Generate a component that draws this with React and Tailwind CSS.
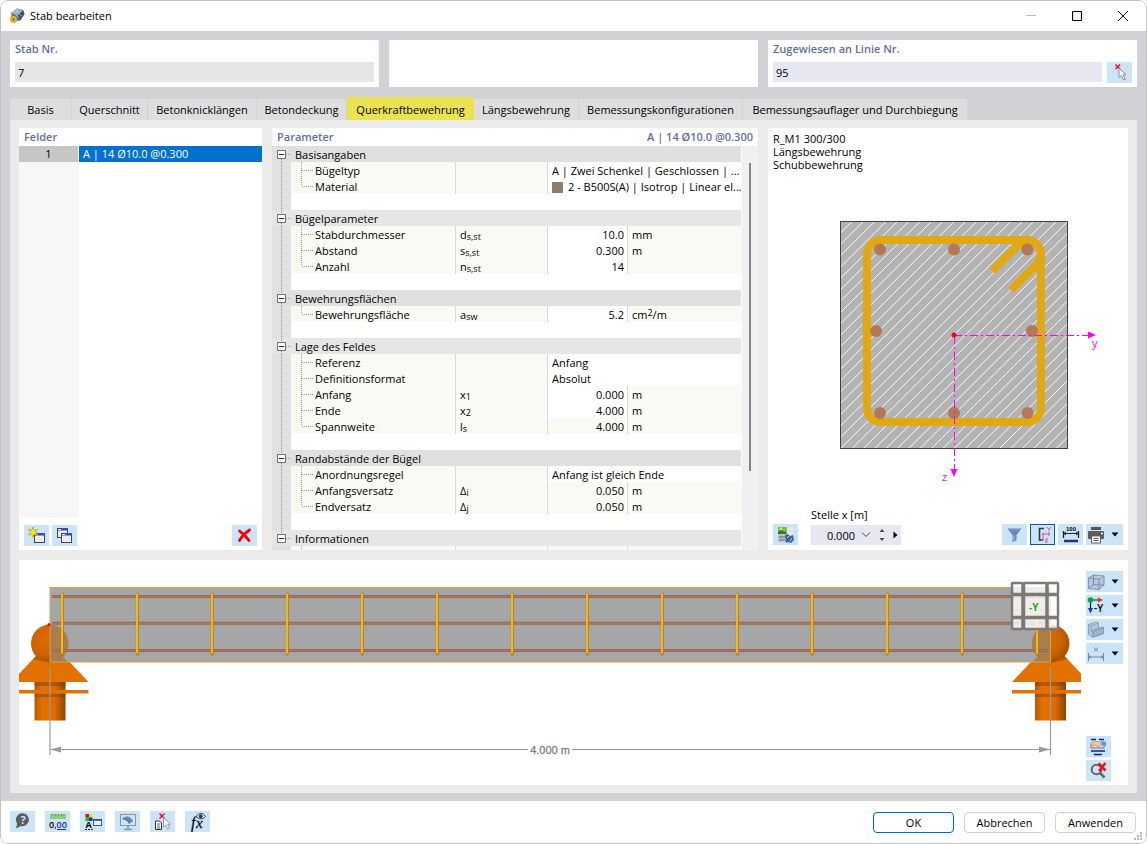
import { useState } from "react";
import clsx from "clsx";

const TABS = [
    { label: "Basis", width: "w-[62px]" },
    { label: "Querschnitt", width: "w-[76px]" },
    { label: "Betonknicklängen", width: "w-[109px]" },
    { label: "Betondeckung", width: "w-[90px]" },
    { label: "Querkraftbewehrung", width: "w-[127px]" },
    { label: "Längsbewehrung", width: "w-[105px]" },
    { label: "Bemessungskonfigurationen", width: "w-[164px]" },
    { label: "Bemessungsauflager und Durchbiegung", width: "w-[225px]" },
];

const GROUPS = [
    {
        title: "Basisangaben",
        rows: [
            { name: "Bügeltyp", text: "A | Zwei Schenkel | Geschlossen | ..." },
            { name: "Material", text: "2 - B500S(A) | Isotrop | Linear el...", swatch: true },
        ],
    },
    {
        title: "Bügelparameter",
        rows: [
            { name: "Stabdurchmesser", sym: "d", sub: "s,st", value: "10.0", unit: "mm" },
            { name: "Abstand", sym: "s", sub: "s,st", value: "0.300", unit: "m" },
            { name: "Anzahl", sym: "n", sub: "s,st", value: "14" },
        ],
    },
    {
        title: "Bewehrungsflächen",
        rows: [{ name: "Bewehrungsfläche", sym: "a", sub: "sw", value: "5.2", unit: "cm", sup: "2", per: "/m" }],
    },
    {
        title: "Lage des Feldes",
        rows: [
            { name: "Referenz", text: "Anfang" },
            { name: "Definitionsformat", text: "Absolut" },
            { name: "Anfang", sym: "x", sub: "1", value: "0.000", unit: "m" },
            { name: "Ende", sym: "x", sub: "2", value: "4.000", unit: "m" },
            { name: "Spannweite", sym: "l", sub: "s", value: "4.000", unit: "m", locked: true },
        ],
    },
    {
        title: "Randabstände der Bügel",
        rows: [
            { name: "Anordnungsregel", text: "Anfang ist gleich Ende" },
            { name: "Anfangsversatz", sym: "Δ", sub: "i", value: "0.050", unit: "m", locked: true },
            { name: "Endversatz", sym: "Δ", sub: "j", value: "0.050", unit: "m", locked: true },
        ],
    },
    { title: "Informationen", rows: [{ name: "", value: "", locked: true }], last: true },
];

const IconButton = ({ label, wide, active, children }) => (
    <button
        type="button"
        aria-label={label}
        className={clsx(
            "flex h-[21px] shrink-0 items-center bg-[#cce4f7]",
            wide ? "w-[37px] justify-start" : "w-[25px] justify-center",
            active && "border border-[#005a9e]"
        )}
    >
        <svg viewBox="0 0 20 20" className="h-5 w-5 shrink-0">{children}</svg>
        {wide && (
            <svg viewBox="0 0 8 5" className="ml-[5px] h-[5px] w-2"><path d="M0.500 0.500h7L4 4.500z" /></svg>
        )}
    </button>
);

const Heading = ({ children }) => (
    <span className="text-[11px] leading-[18px] font-semibold text-[#5f709b]">{children}</span>
);

/* ---- icons ---- */

const CursorIcon = () => (
    <g>
        <path d="M5.500 1.500l4.500 4.500M10 1.500L5.500 6" stroke="#e81123" strokeWidth="1.500" />
        <path d="M9 5v9.500l2.300-2 2.200 4.500 1.800-.8-2.200-4.400h3z" fill="#fff" stroke="#8a8a8a" />
    </g>
);

const WindowShape = ({ x, y }) => (
    <g>
        <rect x={x + 0.5} y={y + 0.5} width="10" height="9" fill="#ececec" stroke="#444" />
        <rect x={x + 4} y={y} width="7" height="2" fill="#2b50e0" />
        <path d={`M${x + 1} ${y + 2.5}h9`} stroke="#777" strokeWidth=".7" />
    </g>
);

const NewIcon = () => (
    <g>
        <WindowShape x={7} y={7} />
        <path d="M6 1l1.200 3.300 3.300-.8-2 2.700 2 2.700-3.300-.7-1.200 3-1.200-3-3.300.7 2-2.700-2-2.700 3.300.8z" fill="#f8f000" stroke="#8d9a20" strokeWidth=".6" />
    </g>
);

const CopyIcon = () => (
    <g><WindowShape x={2} y={2} /><WindowShape x={6} y={7} /></g>
);

const DeleteIcon = () => (
    <path d="M4.500 5C7.500 7.500 11 10 14 14.500M14.500 4C11 6.500 7 10 4.500 14.500" stroke="#fa0000" strokeWidth="2.800" fill="none" strokeLinecap="round" />
);

const ImageExportIcon = () => (
    <g>
        <rect x="2" y="2" width="11" height="15" fill="#b9c9b8" />
        <path d="M10 2h7v9h-7z" fill="#dfe9e6" />
        <rect x="2" y="2" width="9" height="7" fill="#7fb95a" />
        <path d="M2 7l3-3 3 3 1-1 2 3H2z" fill="#287a42" />
        <circle cx="5" cy="4" r="1.500" fill="#f5df2b" />
        <path d="M3 11h6v2H3zM3 14h6v2H3z" fill="#8b979c" />
        <path d="M9 10l3-1 2 2 3-1 1 5-3 3-3-1-2 1z" fill="#3e6690" />
        <path d="M11 13l2-2m1 5l2-3" stroke="#a7d4f4" />
    </g>
);

const FilterIcon = () => (
    <g>
        <path d="M2.500 3.500h14L11.500 10v5.500l-4 1.500v-7z" fill="#6687be" />
        <path d="M4.500 4.500h10l-1 1h-8z" fill="#7f9ccb" />
        <path d="M9 10.500v5" stroke="#b7c9e5" />
    </g>
);

const AxesIcon = () => (
    <g fill="none">
        <path d="M11 3.500H6.500V15h3.500" stroke="#2d3557" strokeWidth="1.600" />
        <path d="M10 9h7M10 9v7M15 7l2 2-2 2" stroke="#d95990" />
        <path d="M14 2l2 2.500L18 2m-2 2.500V6M12 14h3l-3 3h3" stroke="#d95990" />
        <circle cx="10" cy="9" r="1" fill="#d95990" />
    </g>
);

const DimensionIcon = () => (
    <g>
        <path d="M2.500 6v7M17.500 6v7" stroke="#222" strokeWidth="1.300" />
        <path d="M3 8.500h14M5 7L3 8.500 5 10M15 7l2 1.500-2 1.500" stroke="#222" fill="none" />
        <path d="M3 16h14" stroke="#24336a" strokeWidth="2.500" />
        <text x="5" y="5.500" fontSize="6" fontWeight="700" fontFamily="Liberation Sans, sans-serif">100</text>
    </g>
);

const PrinterIcon = () => (
    <g>
        <rect x="5" y="2" width="10" height="3" fill="#555" />
        <rect x="2" y="6" width="16" height="8" rx="1" fill="#5c5c5c" />
        <path d="M5.500 11h9v7h-9z" fill="#fff" stroke="#5c5c5c" />
        <path d="M7.500 13.500h5M7.500 15.500h5" stroke="#555" />
        <circle cx="16" cy="8.500" r="1" fill="#fff" />
    </g>
);

const CubeIcon = () => (
    <g stroke="#7c8ba6" fill="#b3c7e2" strokeWidth=".9">
        <path d="M2.500 6l5-3L18 4v9l-5 4.500-10.500-1z" />
        <path d="M2.500 6l10.500 1 5-3" fill="#c5d6ea" />
        <path d="M13 7v10.500M7.500 3v9.500l-5 4M7.500 12.500L18 13" fill="none" />
    </g>
);

const ViewIcon = () => (
    <g>
        <path d="M4.500 4h9M4.500 5v9" stroke="#222" strokeWidth="1.200" />
        <path d="M12 1.500l5 2.500-5 2.500z" fill="#d43c10" />
        <path d="M2 12h5l-2.500 5.500z" fill="#1238c4" />
        <circle cx="4.500" cy="4" r="2.800" fill="#00a651" />
        <text x="8" y="16" fontSize="10" fontWeight="600" fontFamily="Open Sans, sans-serif">-Y</text>
    </g>
);

const StairsIcon = () => (
    <g stroke="#8795ac" strokeWidth=".8">
        <path d="M2.500 4.500l7-2.500 3 1v5l5-1v6.500l-11 4-4-3z" fill="#b3c7df" />
        <path d="M2.500 4.500L5 6l7.500-3M5 6v5l2 1v5M7 12l10.500-4.500M5 11l7.500-3" fill="none" />
        <path d="M7 12l10.500-4.500v6L7 17z" fill="#9db3cd" />
    </g>
);

const SpanIcon = () => (
    <g stroke="#7185a4" fill="none">
        <path d="M2.500 9v8M17.500 9v8M3 13h14M5 11.500L3 13l2 1.500M15 11.500l2 1.500-2 1.500M8 3.500l4 4M12 3.500l-4 4" />
    </g>
);

const LinesIcon = () => (
    <g>
        <path d="M2 2.500h5M10 2.500h5M2 14h14M5 17.500h8" stroke="#101f8e" strokeWidth="1.300" />
        <rect x="2" y="7" width="13" height="4" fill="#ddd" stroke="#777" />
        <path d="M2 6l4-2 5 1 2 3-4 2-2-2-4 1z" fill="#efc7a4" stroke="#b38665" strokeWidth=".6" />
        <path d="M12 4l5 1v4l-4-1z" fill="#5c96d6" />
    </g>
);

const ZoomResetIcon = () => (
    <g fill="none">
        <circle cx="7.500" cy="8.500" r="4.800" stroke="#666" strokeWidth="2" />
        <path d="M11 12l4.500 4.500" stroke="#666" strokeWidth="2.500" />
        <path d="M9.500 2.500l7 7M16.500 2l-6.500 8" stroke="#f20d18" strokeWidth="2.600" />
    </g>
);

const HelpIcon = () => (
    <g>
        <path d="M3 16.500L4.200 11.500A6.500 6.500 0 1 1 8 14z" fill="#5d5d5d" />
        <text x="7.500" y="12" fontSize="11" fontWeight="700" fill="#cce4f7" fontFamily="Open Sans, sans-serif">?</text>
    </g>
);

const DecimalsIcon = () => (
    <g>
        <path d="M2 2h16v5H2z" fill="#8fce7f" />
        <path d="M4.500 2v2M7.500 2v2M10.500 2v2M13.500 2v2M16 2v2" stroke="#4e9443" strokeWidth=".7" />
        <text x="1" y="15.500" fontSize="9" fontWeight="600" fontFamily="Open Sans, sans-serif">0,<tspan fill="#1d2f9c">00</tspan></text>
        <path d="M9 17.500h9" stroke="#1d2f9c" />
    </g>
);

const DisplayIcon = () => (
    <g>
        <path d="M2.500 2H6v3.500H2.500z" fill="#e00" /><path d="M6 2h3.500v3.500H6z" fill="#ee0" />
        <path d="M2.500 5.500H6V9H2.500z" fill="#0c0" /><path d="M6 5.500h3.500V9H6z" fill="#22d" />
        <text x="2.500" y="16" fontSize="9" fontWeight="700" fontFamily="Open Sans, sans-serif">A</text>
        <path d="M2 17.500h8" stroke="#222" strokeDasharray="2 1" />
        <rect x="10.500" y="7.500" width="8" height="6" fill="#eee" stroke="#556" />
        <path d="M10 8h9" stroke="#24479e" strokeWidth="1.500" />
    </g>
);

const MonitorIcon = () => (
    <g>
        <rect x="2.500" y="2.500" width="15" height="11" fill="#cce4f7" stroke="#8a949d" />
        <path d="M10 14v3M6 17.500h8" stroke="#8a949d" strokeWidth="1.500" />
        <path d="M4 7c4-4 8-3 11 2l-4 3c-1-3-3-4-7-5z" fill="#456f9f" />
        <path d="M6 5.500c3 0 5 2 6.500 5M9 4.500c2 1 3.500 2.500 5 5" stroke="#a0c2df" strokeWidth=".7" fill="none" />
    </g>
);

const PickListIcon = () => (
    <g>
        <path d="M2.500 9h4l2 2v6.500h-6z" fill="#fff" stroke="#333" />
        <path d="M4 12h3M4 14h3M4 16h3" stroke="#333" strokeWidth=".8" />
        <path d="M6.500 1.500l5 5M11.500 1.500l-5 5" stroke="#e81123" strokeWidth="1.500" />
        <path d="M10.500 5.500V15l2.300-2 2 4 1.800-.8-2-4h3z" fill="#fff" stroke="#999" />
    </g>
);

const FormulaIcon = () => (
    <g>
        <text x="3" y="15.500" fontSize="16" fontStyle="italic" fill="#111" stroke="#111" strokeWidth=".3" fontFamily="Liberation Serif, serif">f</text>
        <text x="8" y="15.500" fontSize="15" fontStyle="italic" fill="#111" stroke="#111" strokeWidth=".3" fontFamily="Liberation Serif, serif">x</text>
        <path d="M8 4.500c3-4 7-4 9.500 0-3 3-6.500 3-9.500 0z" fill="#fff" stroke="#26346e" />
        <circle cx="12.700" cy="4.200" r="2" fill="#26346e" />
    </g>
);

const AppLogo = () => (
    <svg viewBox="0 0 16 16" className="h-4 w-4">
        <path d="M2 5l6-4.500 6 1.500 1.500 4-4.500 6.500-6 1z" fill="#5b6f8c" />
        <path d="M8 .5L14 2 8 6.500 2 5z" fill="#a2b2c8" />
        <path d="M14 2l1.500 4-4.500 6.500L8 6.500z" fill="#3b5070" />
        <path d="M4 3.500l6 6M6.500 2l6 6M13 3l-7 6" stroke="#d4dce8" strokeWidth=".7" />
        <path d="M2.500 9V8c0-2.500 4-2.500 4 0v1" fill="none" stroke="#b28a18" />
        <circle cx="4.500" cy="11.500" r="3.500" fill="#e2b62c" />
        <path d="M3.500 10h2v3h-2z" fill="#a77b12" />
    </svg>
);

/* ---- drawings ---- */

const REBARS = [[50, 39.5], [124, 39.5], [197.5, 39.5], [46, 121], [202, 121], [50, 203], [124, 203], [197.5, 203]];

// 45° lines over the whole concrete area, clipped to it
const HATCH = Array.from({ length: 40 }, (_, i) => 22 + i * 11.35);

const SectionDrawing = () => (
    <svg viewBox="0 0 290 280" className="h-[280px] w-[290px] shrink-0">
        <clipPath id="concrete">
            <rect x="10.500" y="11.500" width="227" height="227" />
        </clipPath>
        <rect x="10.500" y="11.500" width="227" height="227" fill="#b3b3b3" />
        <g clipPath="url(#concrete)" stroke="#fafafa" strokeWidth="1">
            {HATCH.map((x) => (
                <path key={x} d={`M${x} 11.500l-230 230`} />
            ))}
        </g>
        <rect x="10.500" y="11.500" width="227" height="227" fill="none" stroke="#404040" />
        <g fill="none" stroke="#e0a913" strokeWidth="8">
            <rect x="37" y="30" width="174" height="182" rx="14" />
            <path d="M162 61l24-24c3-3 7-7 12-7M181 80l25-25c3-3 5-6 5-11" />
        </g>
        {REBARS.map(([x, y]) => (
            <circle key={`${x}-${y}`} cx={x} cy={y} r="6" fill="#b47858" />
        ))}
        <path d="M124 125.500h134M124.500 126v134" stroke="#f0f" strokeDasharray="8 3 2 3" />
        <path d="M258 121.500l8 3.500-8 3.500zM120.500 259h7l-3.500 8z" fill="#f0f" />
        <circle cx="124" cy="125" r="2.500" fill="#f00" />
        <g fill="#f0f" fontSize="11" fontFamily="Open Sans, sans-serif">
            <text x="262" y="137">y</text>
            <text x="112" y="271">z</text>
        </g>
    </svg>
);

const STIRRUPS = Array.from({ length: 14 }, (_, i) => 43.3 + i * 75);

const Support = ({ x }) => (
    <g transform={`translate(${x} 0)`}>
        <rect x="-15.500" y="120" width="31" height="40.500" fill="url(#steel)" />
        <path d="M-15.500 122h31v4h-31zM-15.500 134h31v3h-31z" fill="#7d3c00" opacity=".45" />
        <path d="M-14 96h28l24.500 26h-77z" fill="#e27100" />
        <path d="M-14 96h28l3 3q-17 5-34 0z" fill="#9c4a00" opacity=".6" />
        <rect x="-38.500" y="130" width="77" height="3.500" fill="#e27100" />
        <circle cy="83.500" r="19" fill="url(#ball)" />
    </g>
);

const BeamDrawing = () => (
    <svg viewBox="0 0 1062 225" className="h-[225px] min-w-0 flex-1">
        <defs>
            <linearGradient id="steel">
                <stop offset="0" stopColor="#b85a00" />
                <stop offset=".25" stopColor="#e27100" />
                <stop offset=".65" stopColor="#dd6d00" />
                <stop offset="1" stopColor="#8c4400" />
            </linearGradient>
            <radialGradient id="ball" cx=".4" cy=".4" r=".65">
                <stop offset="0" stopColor="#df6d00" />
                <stop offset=".6" stopColor="#cc6300" />
                <stop offset="1" stopColor="#a34e00" />
            </radialGradient>
        </defs>
        <Support x={31} />
        <Support x={1031.5} />
        <rect x="31" y="27.500" width="1000.500" height="74.500" fill="#a6a6a6" />
        {/* supports showing through the concrete */}
        <g fill="#ad6c28" opacity=".7">
            <path d="M31 64.500a19 19 0 0 1 13 32.500l5 5H31z" />
            <path d="M1031.500 64.500a19 19 0 0 0-13 32.500l-5 5h18z" />
        </g>
        <rect x="31" y="27.500" width="1000.500" height="74.500" fill="none" stroke="#d9a24a" />
        {[36.5, 63.3, 90.4].map((y) => (
            <g key={y}>
                <path d={`M33 ${y}h996`} stroke="#8f6a5a" strokeWidth="3" />
                <path d={`M33 ${y}h996`} stroke="#ae7d68" strokeWidth="1" />
            </g>
        ))}
        {STIRRUPS.map((x) => (
            <g key={x} strokeLinecap="round">
                <path d={`M${x} 34v60`} stroke="#b57d10" strokeWidth="3" />
                <path d={`M${x - 0.3} 34v59`} stroke="#ffc91c" strokeWidth="1.600" />
            </g>
        ))}
        <circle cx="30" cy="64.500" r="1.500" fill="#f00" />
        <g stroke="#9b9b9f" strokeWidth="1.200">
            <path d="M31 107v88M1031.500 107v88M31 189.500h478M553 189.500h478" />
        </g>
        <path d="M31 189.500l11-3v6zM1031 189.500l-11-3v6z" fill="#9b9b9f" />
        <text x="531" y="193.500" fontSize="11" textAnchor="middle" fill="#7f7f84" stroke="#7f7f84" strokeWidth=".3" fontFamily="Liberation Sans, sans-serif">4.000 m</text>
        <g fill="#fff" fillOpacity=".8" stroke="#7c7977" strokeWidth="2.500">
            {[[992.5, 11], [1004.5, 23], [1028, 11]].map(([x, w]) =>
                [[23, 11], [35, 22], [58, 11]].map(([y, h]) => (
                    <rect key={`${x}-${y}`} x={x + 0.5} y={y} width={w - 0.5} height={h} rx=".8" />
                ))
            )}
        </g>
        <text x="1010" y="51" fontSize="10" fontWeight="700" fill="#2f9c2f" fontFamily="Open Sans, sans-serif">-Y</text>
    </svg>
);

/* ---- parameter tree ---- */

const DOT = { stroke: "#9a9a9a", strokeDasharray: "1 1", shapeRendering: "crispEdges" };

const Gutter = ({ line }) => (
    <td className="bg-[#e1e1e1] p-0">
        <svg viewBox="0 0 19 16" className="block h-4 w-[19px]">
            {line && <path d="M9.500 0v16" {...DOT} />}
        </svg>
    </td>
);

const GroupHead = ({ group, index }) => (
    <tr className={clsx("h-4", index % 2 ? "bg-[#e6e6e6]" : "bg-[#e0e0e0]")}>
        <th colSpan={5} className="p-0 text-left font-normal">
            <div className="flex h-4 items-center">
                <button type="button" aria-label={`${group.title} einklappen`} className="h-4 w-[23px] shrink-0">
                    <svg viewBox="0 0 23 16" className="block h-4 w-[23px]">
                        {index > 0 && <path d="M9.500 0v4" {...DOT} />}
                        {!group.last && <path d="M9.500 13v3" {...DOT} />}
                        <path d="M14 8.500h6" {...DOT} />
                        <rect x="5.500" y="4.500" width="8" height="8" fill="#fff" stroke="#777" />
                        <path d="M7 8.500h5" stroke="#333" />
                    </svg>
                </button>
                <span className="pt-0.5">{group.title}</span>
            </div>
        </th>
    </tr>
);

// leading-[14px] with 2px on top keeps every row at 16px
const cell = "border-l border-[#d9d9d9] pt-0.5 pb-0 pl-1 leading-[14px]";

const ParamRow = ({ row, end, last }) => (
    <tr className="h-4">
        <Gutter line={!last} />
        <td className="bg-[#f9faf4] p-0">
            <div className="flex h-4 items-center">
                <svg viewBox="0 0 24 16" className="h-4 w-6 shrink-0">
                    <path d={end ? "M10.500 0v8" : "M10.500 0v16"} {...DOT} />
                    <path d="M11 8.500h11" {...DOT} />
                </svg>
                <span className="pt-0.5">{row.name}</span>
            </div>
        </td>
        <td className={clsx(cell, "bg-[#f9faf4]")}>
            {row.sym}
            <sub className="relative bottom-0 align-[-1px] text-[9px] leading-none">{row.sub}</sub>
        </td>
        {row.text ? (
            <td colSpan={2} className={clsx(cell, "bg-white")}>
                <div className="flex items-center gap-[5px] whitespace-nowrap">
                    {row.swatch && <span className="h-[11px] w-[11px] shrink-0 bg-[#8f7d6b]" />}
                    {row.text}
                </div>
            </td>
        ) : (
            <>
                <td className={clsx(cell, "pr-[3px] text-right", row.locked ? "bg-[#f9faf4]" : "bg-white")}>
                    {row.value}
                </td>
                <td className={clsx(cell, "bg-[#f9faf4]")}>
                    {row.unit}
                    {row.sup && <sup className="relative top-0 align-[3px] text-[9px] leading-none">{row.sup}</sup>}
                    {row.per}
                </td>
            </>
        )}
    </tr>
);

const ParamTable = () => (
    <table className="w-full table-fixed border-separate border-spacing-0 bg-white text-[11px] leading-[14px]">
        <colgroup>
            <col className="w-[19px]" />
            <col className="w-[164px]" />
            <col className="w-[92px]" />
            <col className="w-20" />
            <col />
        </colgroup>
        {GROUPS.map((group, i) => (
            <tbody key={group.title}>
                <GroupHead group={group} index={i} />
                {group.rows.map((row, r) => (
                    <ParamRow key={row.name} row={row} end={r === group.rows.length - 1} last={group.last} />
                ))}
                {!group.last && (
                    <tr className="h-4">
                        <Gutter line />
                        <td colSpan={4} className="bg-white p-0" />
                    </tr>
                )}
            </tbody>
        ))}
    </table>
);

const TitleBar = () => (
    <header className="flex h-[30px] items-center bg-white pl-2">
        <AppLogo />
        <h1 className="ml-[5px] flex-1 text-[11px]">Stab bearbeiten</h1>
        <button type="button" aria-label="Minimieren" className="flex h-full w-[46px] items-center justify-center">
            <svg viewBox="0 0 10 10" className="h-[10px] w-[10px]"><path d="M0 4.500h10" stroke="#bbb" /></svg>
        </button>
        <button type="button" aria-label="Maximieren" className="flex h-full w-[46px] items-center justify-center">
            <svg viewBox="0 0 10 10" className="h-[10px] w-[10px]"><rect x=".5" y=".5" width="9" height="9" rx="1" fill="none" stroke="#000" strokeWidth="1.200" /></svg>
        </button>
        <button type="button" aria-label="Schließen" className="flex h-full w-[46px] items-center justify-center">
            <svg viewBox="0 0 10 10" className="h-[10px] w-[10px]"><path d="M0 0l10 10M10 0L0 10" stroke="#111" /></svg>
        </button>
    </header>
);

const App = () => {
    const [tab, setTab] = useState("Querkraftbewehrung");

    return (
        <div className="flex min-h-screen flex-col overflow-hidden rounded-lg border border-[#c3c3c3] bg-white font-['Open_Sans',sans-serif] text-[11px] text-black">
            <TitleBar />

            <main className="flex-1 bg-[#d2d1d6] px-[9px] pt-[9px] pb-2">
                <div className="grid grid-cols-3 gap-[10px]">
                    <div className="flex h-[47px] flex-col bg-white px-[5px]">
                        <label htmlFor="stab"><Heading>Stab Nr.</Heading></label>
                        <input id="stab" defaultValue="7" readOnly className="mt-1 h-5 w-full bg-[#e6e6e6] px-[3px] outline-none" />
                    </div>
                    <div className="bg-white" />
                    <div className="flex h-[47px] flex-col bg-white px-[5px]">
                        <label htmlFor="linie"><Heading>Zugewiesen an Linie Nr.</Heading></label>
                        <div className="mt-1 flex gap-[5px]">
                            <input id="linie" defaultValue="95" className="h-5 min-w-0 flex-1 bg-[#e7e7f2] px-[3px] outline-none" />
                            <IconButton label="Linie wählen"><CursorIcon /></IconButton>
                        </div>
                    </div>
                </div>

                <div role="tablist" className="mt-[10px] flex items-end">
                    {TABS.map((t) => (
                        <button
                            key={t.label}
                            type="button"
                            role="tab"
                            aria-selected={tab === t.label}
                            onClick={() => setTab(t.label)}
                            className={clsx(
                                "shrink-0 whitespace-nowrap text-center",
                                t.width,
                                tab === t.label ? "h-[23px] bg-[#ebe251] pt-1" : "h-[21px] border-r border-[#d2d1d6] bg-[#dedede] pt-0.5"
                            )}
                        >
                            {t.label}
                        </button>
                    ))}
                </div>

                <div className="bg-[#ebebeb] px-[9px] pt-2 pb-2">
                    <div className="grid h-[422px] grid-cols-[243fr_486fr_360fr] gap-[10px]">
                        <section className="flex min-w-0 flex-col bg-white">
                            <h2 className="flex h-[18px] pl-[5px]"><Heading>Felder</Heading></h2>
                            <div className="flex flex-1 flex-col">
                                <button type="button" className="flex h-4 text-left leading-4">
                                    <span className="w-[59px] bg-[#c6c6c6] text-center">1</span>
                                    <span className="ml-px flex-1 bg-[#0072ce] pl-1 text-white">A | 14 Ø10.0 @0.300</span>
                                </button>
                                <div className="w-[60px] flex-1 bg-[#f7f7f7]" />
                            </div>
                            <div className="flex gap-[3px] px-[5px] pt-[7px] pb-1">
                                <IconButton label="Neu"><NewIcon /></IconButton>
                                <IconButton label="Kopieren"><CopyIcon /></IconButton>
                                <span className="flex-1" />
                                <IconButton label="Löschen"><DeleteIcon /></IconButton>
                            </div>
                        </section>

                        <section className="flex h-[422px] min-w-0 flex-col bg-white">
                            <h2 className="flex h-[18px] shrink-0 justify-between px-[5px]">
                                <Heading>Parameter</Heading>
                                <Heading>A | 14 Ø10.0 @0.300</Heading>
                            </h2>
                            <div className="flex min-h-0 flex-1">
                                <div className="min-w-0 flex-1 overflow-hidden">
                                    <ParamTable />
                                </div>
                                <div className="ml-px flex w-4 justify-center bg-[#f0f0f0] pt-[17px]">
                                    <span className="h-[308px] w-[2px] bg-[#868686]" />
                                </div>
                            </div>
                        </section>

                        <section className="flex min-w-0 flex-col bg-white">
                            <p className="px-[5px] pt-1 leading-[13px]">
                                R_M1 300/300<br />Längsbewehrung<br />Schubbewehrung
                            </p>
                            <div className="flex flex-1 items-end justify-center pl-[54px]">
                                <SectionDrawing />
                            </div>
                            <div className="flex items-end gap-[3px] px-[5px] pt-[13px] pb-[5px]">
                                <IconButton label="Bild exportieren"><ImageExportIcon /></IconButton>
                                <div className="ml-[10px]">
                                    <label htmlFor="stelle" className="block pt-0.5 leading-5">Stelle x [m]</label>
                                    <div className="flex h-5 w-[90px] items-center bg-[#e7e7f2]">
                                        <input id="stelle" defaultValue="0.000" className="w-[44px] bg-transparent pt-0.5 text-right outline-none" />
                                        <button type="button" aria-label="Auswahl" className="ml-[6px]">
                                            <svg viewBox="0 0 10 6" className="h-[6px] w-[10px]"><path d="M1 .5l4 4 4-4" fill="none" stroke="#444" /></svg>
                                        </button>
                                        <button type="button" aria-label="Wert ändern" className="ml-2">
                                            <svg viewBox="0 0 6 14" className="h-[14px] w-[6px]"><path d="M0.500 4L3 1l2.500 3zM0.500 10L3 13l2.500-3z" fill="#444" /></svg>
                                        </button>
                                        <button type="button" aria-label="Weiter" className="ml-2">
                                            <svg viewBox="0 0 5 8" className="h-2 w-[5px]"><path d="M0.500 0.500L4.500 4l-4 3.500z" /></svg>
                                        </button>
                                    </div>
                                </div>
                                <span className="flex-1" />
                                <IconButton label="Filter"><FilterIcon /></IconButton>
                                <IconButton label="Achsen" active><AxesIcon /></IconButton>
                                <IconButton label="Bemaßung"><DimensionIcon /></IconButton>
                                <IconButton label="Drucken" wide><PrinterIcon /></IconButton>
                            </div>
                        </section>
                    </div>

                    <section className="mt-[10px] flex bg-white">
                        <BeamDrawing />
                        <div className="flex flex-col gap-[3px] px-[5px] pt-[11px] pb-1">
                            <IconButton label="Darstellung" wide><CubeIcon /></IconButton>
                            <IconButton label="Ansicht" wide><ViewIcon /></IconButton>
                            <IconButton label="Sichtbarkeit" wide><StairsIcon /></IconButton>
                            <IconButton label="Abmessungen" wide><SpanIcon /></IconButton>
                            <span className="flex-1" />
                            <IconButton label="Einstellungen"><LinesIcon /></IconButton>
                            <IconButton label="Zoom zurücksetzen"><ZoomResetIcon /></IconButton>
                        </div>
                    </section>
                </div>
            </main>

            <footer className="relative flex h-[42px] items-start gap-[10px] bg-white pt-[10px] pr-[10px] pl-[9px]">
                <IconButton label="Hilfe"><HelpIcon /></IconButton>
                <IconButton label="Einheiten"><DecimalsIcon /></IconButton>
                <IconButton label="Anzeige"><DisplayIcon /></IconButton>
                <IconButton label="Grafik"><MonitorIcon /></IconButton>
                <IconButton label="Auswahlliste"><PickListIcon /></IconButton>
                <IconButton label="Formeln"><FormulaIcon /></IconButton>
                <span className="flex-1" />
                <div className="flex gap-[10px] pt-px">
                    <button type="button" className="h-[21px] w-[81px] rounded border border-[#0067c0] bg-white pt-px">OK</button>
                    <button type="button" className="h-[21px] w-[81px] rounded border border-[#d0d0d0] bg-white pt-px">Abbrechen</button>
                    <button type="button" className="h-[21px] w-[81px] rounded border border-[#d0d0d0] bg-white pt-px">Anwenden</button>
                </div>
                <svg viewBox="0 0 9 9" className="absolute right-[3px] bottom-[2px] h-[9px] w-[9px]" fill="#b5b5b5">
                    <path d="M6 0h2v2H6zM3 3h2v2H3zM6 3h2v2H6zM0 6h2v2H0zM3 6h2v2H3zM6 6h2v2H6z" />
                </svg>
            </footer>
        </div>
    );
};

export default App;
